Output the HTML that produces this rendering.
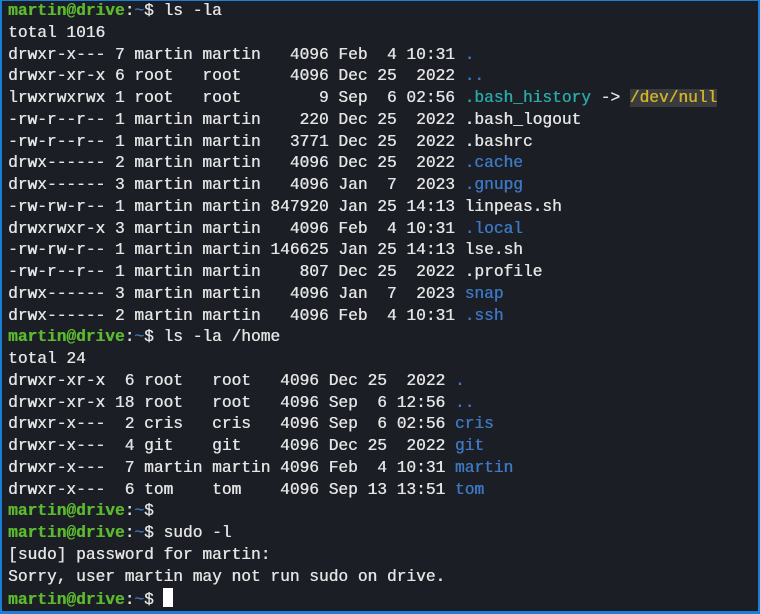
<!DOCTYPE html>
<html><head><style>
html,body{margin:0;padding:0}
body{width:760px;height:614px;background:#1a7fd6;position:relative;overflow:hidden}
.t{position:absolute;left:2px;top:1px;width:756px;height:610px;background:#1b1e25}
pre{margin:0;position:absolute;left:6px;top:0px;font-family:"Liberation Mono","DejaVu Sans Mono",monospace;font-size:16.2px;line-height:21.75px;color:#e4e4e4;font-weight:normal;text-shadow:0.4px 0 0 currentColor}
.g{color:#5cb82f;font-weight:bold}.b{color:#3d78c4}.c{color:#2ba8a8}.y{color:#d2b22a;background:#3a3b3d}
.cur{display:inline-block;width:10px;height:19px;background:#fff;vertical-align:-3px}
</style></head><body><div class="t"><pre><span class="g">martin@drive</span>:<span class="b">~</span>$ ls -la
total 1016
drwxr-x--- 7 martin martin   4096 Feb  4 10:31 <span class="b">.</span>
drwxr-xr-x 6 root   root     4096 Dec 25  2022 <span class="b">..</span>
lrwxrwxrwx 1 root   root        9 Sep  6 02:56 <span class="c">.bash_history</span> -&gt; <span class="y">/dev/null</span>
-rw-r--r-- 1 martin martin    220 Dec 25  2022 .bash_logout
-rw-r--r-- 1 martin martin   3771 Dec 25  2022 .bashrc
drwx------ 2 martin martin   4096 Dec 25  2022 <span class="b">.cache</span>
drwx------ 3 martin martin   4096 Jan  7  2023 <span class="b">.gnupg</span>
-rw-rw-r-- 1 martin martin 847920 Jan 25 14:13 linpeas.sh
drwxrwxr-x 3 martin martin   4096 Feb  4 10:31 <span class="b">.local</span>
-rw-rw-r-- 1 martin martin 146625 Jan 25 14:13 lse.sh
-rw-r--r-- 1 martin martin    807 Dec 25  2022 .profile
drwx------ 3 martin martin   4096 Jan  7  2023 <span class="b">snap</span>
drwx------ 2 martin martin   4096 Feb  4 10:31 <span class="b">.ssh</span>
<span class="g">martin@drive</span>:<span class="b">~</span>$ ls -la /home
total 24
drwxr-xr-x  6 root   root   4096 Dec 25  2022 <span class="b">.</span>
drwxr-xr-x 18 root   root   4096 Sep  6 12:56 <span class="b">..</span>
drwxr-x---  2 cris   cris   4096 Sep  6 02:56 <span class="b">cris</span>
drwxr-x---  4 git    git    4096 Dec 25  2022 <span class="b">git</span>
drwxr-x---  7 martin martin 4096 Feb  4 10:31 <span class="b">martin</span>
drwxr-x---  6 tom    tom    4096 Sep 13 13:51 <span class="b">tom</span>
<span class="g">martin@drive</span>:<span class="b">~</span>$
<span class="g">martin@drive</span>:<span class="b">~</span>$ sudo -l
[sudo] password for martin:
Sorry, user martin may not run sudo on drive.
<span class="g">martin@drive</span>:<span class="b">~</span>$ <span class="cur"></span></pre></div></body></html>
